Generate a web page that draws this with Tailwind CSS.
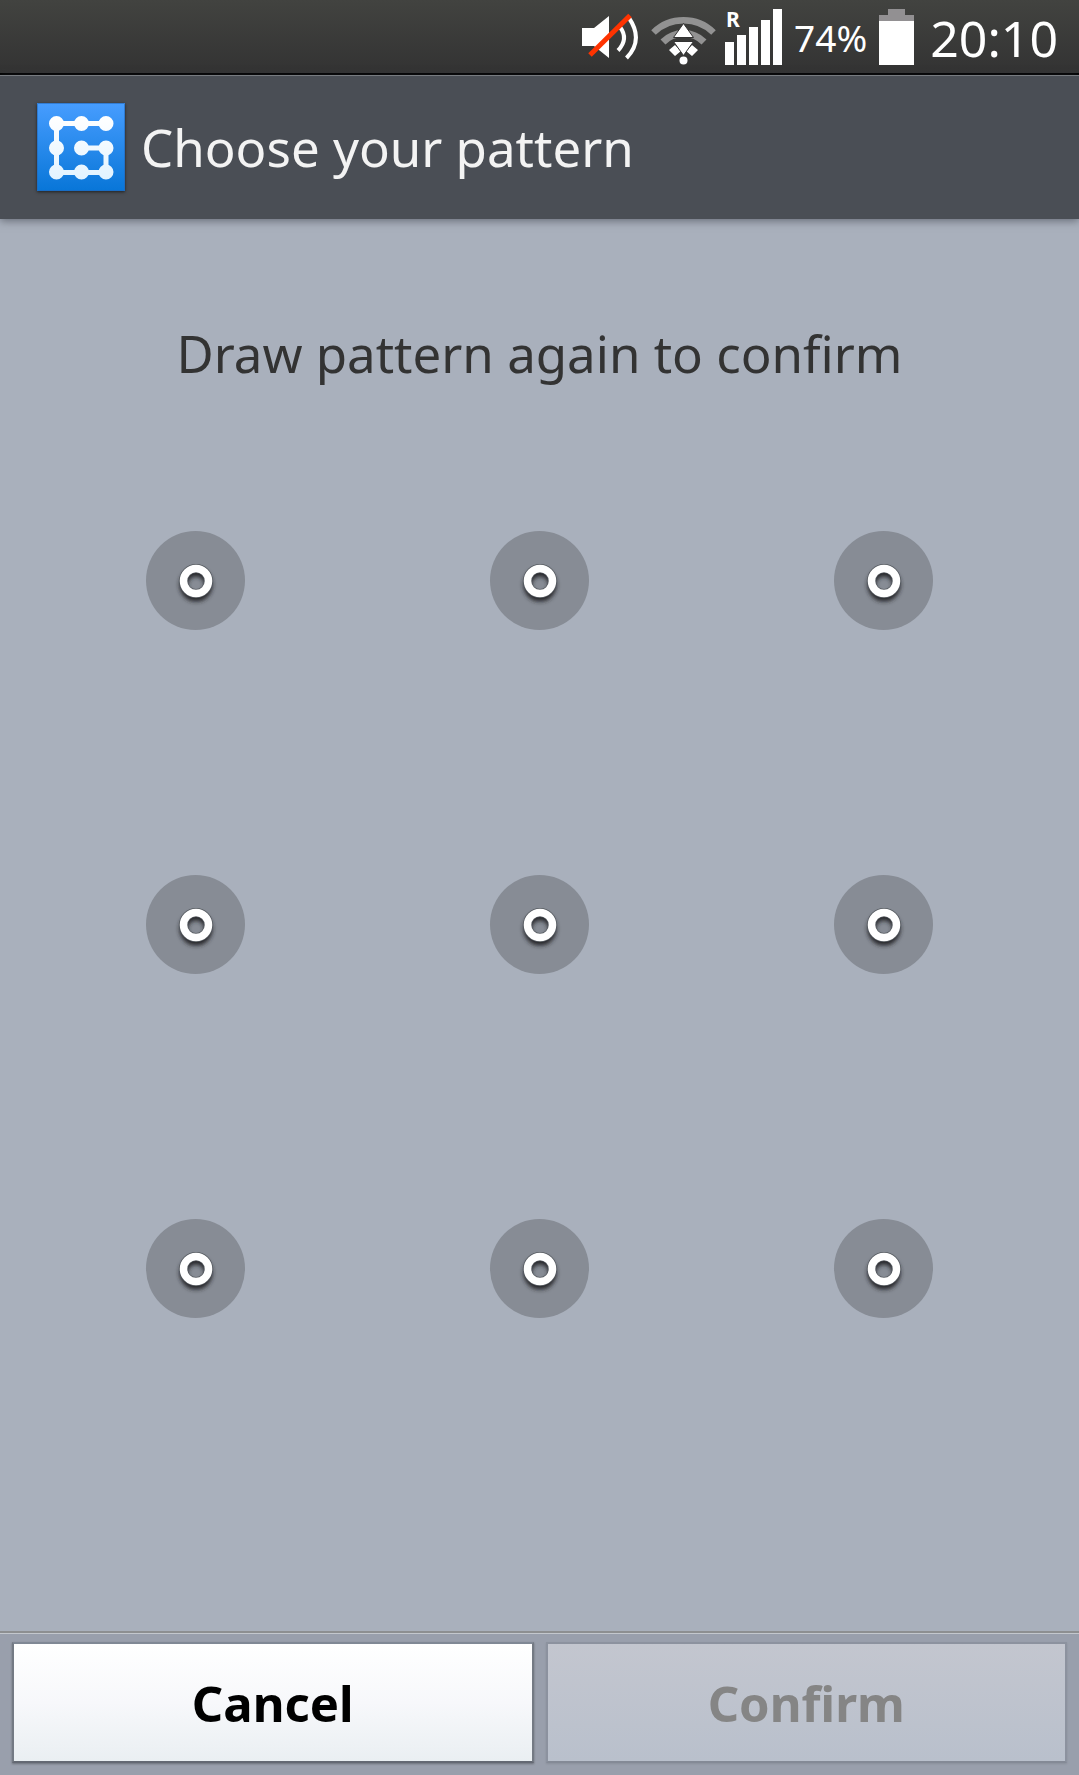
<!DOCTYPE html>
<html lang="en">
<head>
<meta charset="utf-8">
<meta name="viewport" content="width=device-width, initial-scale=1">
<title>Choose your pattern</title>
<script src="https://cdn.jsdelivr.net/npm/@tailwindcss/browser@4"></script>
</head>
<body class="flex min-h-screen flex-col bg-[#a9b0bc] font-['Noto_Sans',sans-serif]">
  <!-- Status bar -->
  <div class="flex h-[75px] items-start justify-end border-b-2 border-black bg-linear-to-b from-[#424340] to-[#333333] pr-[21px] text-white">
    <svg class="mr-3 h-[73px] w-[58px]" viewBox="581 0 58 73" role="img" aria-label="Muted">
      <path d="M582 28h12l15-12v42l-15-12h-12z" fill="#fff"/>
      <path d="M620 27q9 12-2 23.500" fill="none" stroke="#fff" stroke-width="4"/>
      <path d="M629 18q15 22-2.500 40" fill="none" stroke="#fff" stroke-width="4"/>
      <path d="M590 55L630 15.500" stroke="#ff3300" stroke-width="5"/>
    </svg>
    <svg class="mr-2 h-[73px] w-[66px]" viewBox="651 0 66 73" role="img" aria-label="Wi-Fi">
      <path d="M653.500 32.500a43 43 0 0 1 60 0" fill="none" stroke="#929292" stroke-width="6.500"/>
      <path d="M663 42a29 29 0 0 1 41 0" fill="none" stroke="#929292" stroke-width="7"/>
      <path d="M669 50l6-5 6 6-6 5zM698 50l-6-5-6 6 6 5z" fill="#fff"/>
      <path d="M683.500 23.500l10 14h-20zM683.500 55.500l10-14h-20z" fill="#fff" stroke="#333" stroke-width="1"/>
      <circle cx="683.500" cy="60.500" r="4" fill="#fff"/>
    </svg>
    <svg class="mr-3 h-[73px] w-[57px]" viewBox="725 0 57 73" role="img" aria-label="Roaming, full signal">
      <path d="M725 42h9v23h-9zM737 35h9v30h-9zM749 27h9v38h-9zM761 20h9v45h-9zM773 9h9v56h-9z" fill="#fff"/>
      <text x="726" y="27" fill="#fff" font-size="21" font-weight="700">R</text>
    </svg>
    <span class="mr-3 text-[37px] leading-[76px]">74%</span>
    <svg class="mr-4 h-[73px] w-[35px]" viewBox="880 0 35 73" role="img" aria-label="Battery">
      <path d="M889 9h17v6h9v6h-35v-6h9z" fill="#929092"/>
      <path d="M880 21h35v44h-35z" fill="#fff"/>
    </svg>
    <time class="text-[50px] leading-[76px]">20:10</time>
  </div>

  <!-- Title bar -->
  <header class="flex h-36 items-center border-t border-[#777b80] bg-[#4a4e55] px-[37px] pb-0.5 shadow-[0_2px_8px_rgba(60,65,75,0.6)]">
    <svg class="mr-4 size-[88px] shadow-[0_1px_3px_rgba(0,0,0,0.6)]" viewBox="0 0 88 88" aria-hidden="true">
      <defs>
        <linearGradient id="tile" x2="0" y2="1"><stop stop-color="#479dff"/><stop offset="1" stop-color="#0876d8"/></linearGradient>
        <linearGradient id="mark" gradientUnits="userSpaceOnUse" x1="0" y1="13" x2="0" y2="76"><stop stop-color="#fff"/><stop offset="1" stop-color="#e2f3ff"/></linearGradient>
      </defs>
      <path d="M0 0h88v88H0z" fill="url(#tile)"/>
      <path d="M.5 .5h87v87H.5z" fill="none" stroke="#2467b8" stroke-opacity=".6"/>
      <path d="M69 20.500H19.500V69.500H69V45H44.500" fill="none" stroke="url(#mark)" stroke-width="5"/>
      <g fill="url(#mark)">
        <path d="M12 20.500a7.500 7.500 0 0 1 15 0a7.500 7.500 0 0 1-15 0M37 20.500a7.500 7.500 0 0 1 15 0a7.500 7.500 0 0 1-15 0M61.500 20.500a7.500 7.500 0 0 1 15 0a7.500 7.500 0 0 1-15 0M12 45a7.500 7.500 0 0 1 15 0a7.500 7.500 0 0 1-15 0M37 45a7.500 7.500 0 0 1 15 0a7.500 7.500 0 0 1-15 0M61.500 45a7.500 7.500 0 0 1 15 0a7.500 7.500 0 0 1-15 0M12 69a7.500 7.500 0 0 1 15 0a7.500 7.500 0 0 1-15 0M37 69a7.500 7.500 0 0 1 15 0a7.500 7.500 0 0 1-15 0M61.500 69a7.500 7.500 0 0 1 15 0a7.500 7.500 0 0 1-15 0"/>
      </g>
    </svg>
    <h1 class="text-[51px] leading-[72px] text-[#f3f3f3]">Choose your pattern</h1>
  </header>

  <!-- Pattern grid -->
  <main class="flex flex-1 flex-col px-6 pt-[98px]">
    <p class="mb-5 text-center text-[51px] leading-[72px] text-[#333]">Draw pattern again to confirm</p>
    <div id="grid" class="grid grid-cols-3"></div>
  </main>

  <!-- Actions -->
  <footer class="border-t-2 border-[#8d8f91] bg-[#999fac]">
    <div class="grid grid-cols-2 gap-3 border-t border-[#c3c7cd] px-3 pt-2 pb-3">
      <button type="button" class="h-[121px] border-2 border-t-[#808895] border-x-[#747a84] border-b-[#646973] bg-linear-to-b from-white via-[#f7f8fb] to-[#eaeff2] text-[49px] leading-[72px] font-bold text-black shadow-[0_1px_2px_rgba(0,0,0,0.3)]">Cancel</button>
      <button type="button" disabled class="h-[121px] border-2 border-[#8c929f] border-b-[#848a96] bg-linear-to-b from-[#c3c6cf] to-[#b9c0cc] text-[49px] leading-[72px] font-bold text-[#858585] shadow-[0_1px_2px_rgba(0,0,0,0.1)]">Confirm</button>
    </div>
  </footer>

  <template id="dot">
    <div class="flex aspect-square items-center justify-center">
      <button type="button" class="size-[99px] rounded-full bg-[#878c95]">
        <svg class="size-full" viewBox="0 0 99 99" aria-hidden="true">
          <defs>
            <filter id="soft" x="-50%" y="-50%" width="200%" height="200%"><feGaussianBlur stdDeviation="2"/></filter>
          </defs>
          <circle cx="50" cy="54" r="12.500" fill="none" stroke="#25282b" stroke-width="8" filter="url(#soft)"/>
          <circle cx="50" cy="50" r="12.500" fill="none" stroke="#555a60" stroke-width="9"/>
          <circle cx="50" cy="50" r="12.500" fill="none" stroke="#fff" stroke-width="7.500"/>
        </svg>
      </button>
    </div>
  </template>
  <script>
    const grid = document.getElementById('grid');
    const dot = document.getElementById('dot');
    for (let i = 1; i <= 9; i++) {
      const cell = dot.content.cloneNode(true);
      cell.querySelector('button').setAttribute('aria-label', 'Dot ' + i);
      grid.append(cell);
    }
  </script>
</body>
</html>
